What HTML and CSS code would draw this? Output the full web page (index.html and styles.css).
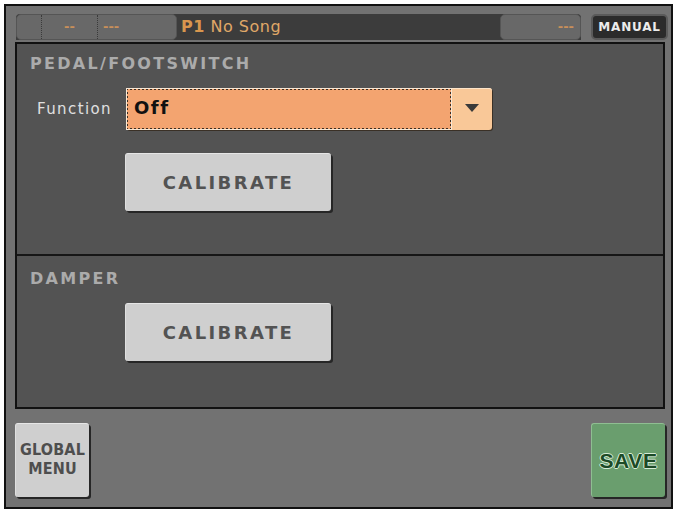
FILE: index.html
```html
<!DOCTYPE html>
<html>
<head>
<meta charset="utf-8">
<link rel="stylesheet" href="styles.css">
</head>
<body>
<div class="screen">
  <div class="topbar">
    <div class="status">
      <div class="seg-left">
        <div class="cell c1"></div>
        <div class="cell c2">--</div>
        <div class="cell c3">---</div>
      </div>
      <div class="title"><b>P1</b> No Song</div>
      <div class="seg-right">---</div>
    </div>
    <div class="manual">MANUAL</div>
  </div>

  <div class="panel">
    <div class="section s1">
      <div class="heading">PEDAL/FOOTSWITCH</div>
      <div class="row">
        <div class="label">Function</div>
        <div class="dropdown">
          <div class="dd-field">Off</div>
          <div class="dd-arrow"><span class="tri"></span></div>
        </div>
      </div>
      <div class="btn calibrate">CALIBRATE</div>
    </div>
    <div class="section s2">
      <div class="heading">DAMPER</div>
      <div class="btn calibrate">CALIBRATE</div>
    </div>
  </div>

  <div class="bottom">
    <div class="btn square global">GLOBAL<br>MENU</div>
    <div class="btn square save">SAVE</div>
  </div>
</div>
</body>
</html>
```

FILE: styles.css
```css
html, body {
  margin: 0;
  padding: 0;
  background: #ffffff;
}

body {
  font-family: "DejaVu Sans", "Liberation Sans", sans-serif;
}

.screen {
  margin: 4px 0 0 4px;
  width: 665px;
  height: 485px;
  border: 2px solid #111;
  background: #727272;
  display: flex;
  flex-direction: column;
  padding: 8px 0 8px 0;
  box-sizing: content-box;
}

/* top bar */
.topbar {
  display: flex;
  height: 27px;
  margin-left: 10px;
  margin-right: 3px;
}

.status {
  display: flex;
  width: 565px;
  height: 26px;
  background: #3c3c3c;
  border-radius: 4px 4px 0 0;
}

.seg-left {
  display: flex;
  width: 161px;
  height: 26px;
  background: #686868;
  border: 1px solid #555;
  border-radius: 5px;
  box-sizing: border-box;
}

.cell {
  height: 100%;
  color: #c8905a;
  font-size: 13px;
  font-weight: bold;
  line-height: 24px;
}

.c1 { width: 24px; border-right: 1px dotted #3a3a3a; }
.c2 { width: 55px; border-right: 1px dotted #3a3a3a; text-align: center; }
.c3 { flex: 1; padding-left: 5px; }

.title {
  flex: 1;
  color: #e0a868;
  font-size: 16px;
  line-height: 26px;
  padding-left: 4px;
  letter-spacing: 0.5px;
}

.title b {
  font-weight: bold;
  color: #d8964e;
}

.seg-right {
  width: 81px;
  height: 26px;
  box-sizing: border-box;
  background: #686868;
  border: 1px solid #555;
  border-radius: 5px;
  color: #c8905a;
  font-size: 13px;
  font-weight: bold;
  line-height: 24px;
  text-align: right;
  padding-right: 6px;
}

.manual {
  margin-left: 10px;
  width: 77px;
  height: 26px;
  box-sizing: border-box;
  background: #2b2b2b;
  border: 2px solid #5a5a5a;
  border-radius: 5px;
  color: #ececec;
  font-size: 12px;
  font-weight: bold;
  letter-spacing: 0.8px;
  text-align: center;
  line-height: 22px;
}

/* panel */
.panel {
  margin-top: 1px;
  margin-left: 9px;
  width: 650px;
  height: 367px;
  box-sizing: border-box;
  border: 2px solid #111;
  background: #535353;
  display: flex;
  flex-direction: column;
}

.section {
  padding-left: 13px;
}

.s1 {
  height: 210px;
  border-bottom: 2px solid #161616;
}

.s2 {
  flex: 1;
}

.heading {
  color: #ababab;
  font-size: 16px;
  font-weight: bold;
  letter-spacing: 2.3px;
  line-height: 20px;
  padding-top: 10px;
}

.s2 .heading {
  padding-top: 13px;
}

.row {
  display: flex;
  align-items: center;
  margin-top: 14px;
  height: 42px;
}

.label {
  color: #e0e0e0;
  font-size: 15px;
  letter-spacing: 1.4px;
  width: 96px;
  padding-left: 7px;
  box-sizing: border-box;
}

.dropdown {
  display: flex;
  width: 366px;
  height: 42px;
  background: #f9c898;
  border-radius: 3px;
  box-shadow: inset 0 1px 0 #fde4c8, 1px 1px 0 #3a3026;
}

.dd-field {
  width: 326px;
  height: 42px;
  box-sizing: border-box;
  background: #f3a470;
  border: 2px dotted #3b2e22;
  outline: 1px solid #f7e8d6;
  outline-offset: -1px;
  color: #111;
  font-size: 18px;
  font-weight: bold;
  letter-spacing: 1.5px;
  line-height: 36px;
  padding-left: 6px;
}

.dd-arrow {
  flex: 1;
  display: flex;
  align-items: center;
  justify-content: center;
}

.tri {
  width: 0;
  height: 0;
  border-left: 7px solid transparent;
  border-right: 7px solid transparent;
  border-top: 8px solid #3a3a3a;
  margin-top: -2px;
}

.btn {
  box-sizing: border-box;
  background: #cfcfcf;
  border-radius: 3px;
  border-top: 1px solid #e6e6e6;
  border-left: 1px solid #e0e0e0;
  box-shadow: 2px 2px 0 #262626;
  color: #535353;
  font-weight: bold;
  text-align: center;
}

.calibrate {
  margin-left: 95px;
  width: 206px;
  height: 58px;
  font-size: 18px;
  letter-spacing: 2.4px;
  line-height: 58px;
}

.s1 .calibrate {
  margin-top: 23px;
}

.s2 .calibrate {
  margin-top: 14px;
}

/* bottom buttons */
.bottom {
  display: flex;
  justify-content: space-between;
  margin-top: 14px;
  margin-left: 9px;
  margin-right: 6px;
}

.square {
  width: 74px;
  height: 74px;
}

.global {
  font-family: "DejaVu Sans Condensed", "DejaVu Sans", sans-serif;
  font-size: 16px;
  line-height: 19px;
  padding-top: 16px;
  letter-spacing: 0.2px;
  color: #4e4e4e;
}

.save {
  background: #6a9e6e;
  border-top: 1px solid #8fbe92;
  border-left: 1px solid #8fbe92;
  color: #1c4a26;
  font-family: "Liberation Sans", Arial, sans-serif;
  font-size: 21px;
  letter-spacing: 0.6px;
  line-height: 74px;
  text-shadow: 1px 0 0 #d6ecd6, -1px 0 0 #d6ecd6, 0 1px 0 #d6ecd6, 0 -1px 0 #d6ecd6;
}
```
